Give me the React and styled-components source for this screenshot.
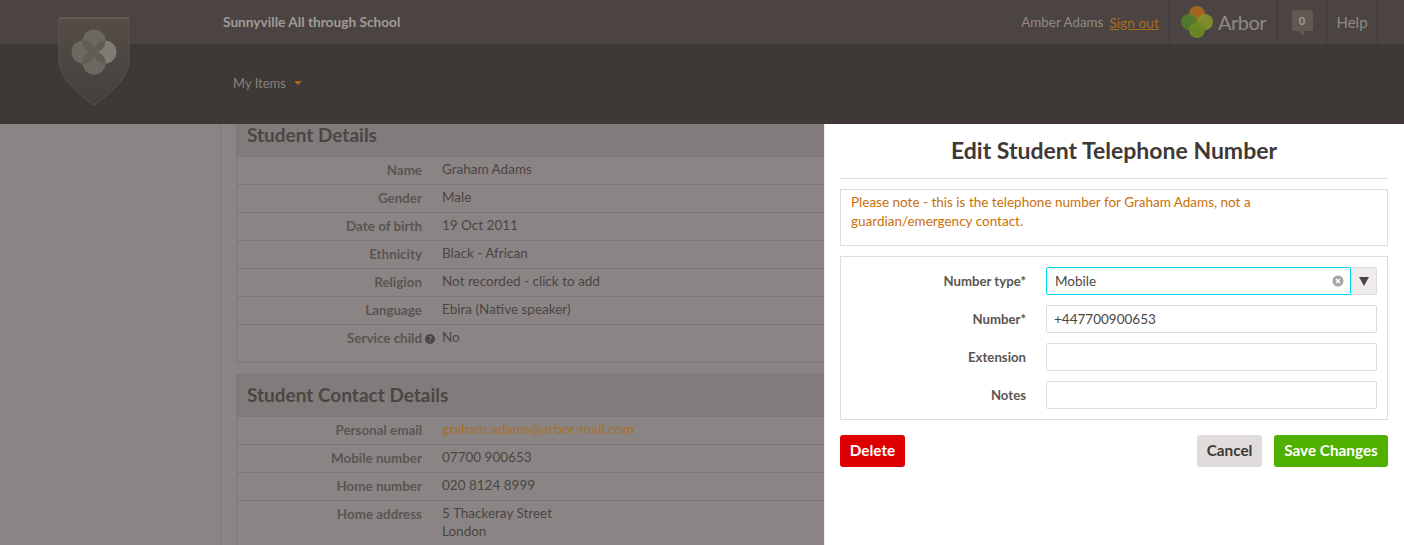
import React from 'react'
import styled, { createGlobalStyle } from 'styled-components'

const Global = createGlobalStyle`
  html, body { margin: 0; padding: 0; height: 100%; }
  body { font-family: "Lato", "Noto Sans", sans-serif; font-size: 14px; color: #3e3936; background: #8a8584; }
`

const Page = styled.div`
  position: relative;
  height: 545px;
  overflow: hidden;
  display: flex;
  flex-direction: column;
`

const TopBar = styled.header`
  height: 44px;
  flex: none;
  box-sizing: border-box;
  display: flex;
  align-items: center;
  padding-left: 223px;
  padding-right: 26px;
  background: #4b4442;
`

const SchoolName = styled.div`
  font-size: 13.7px;
  font-weight: 700;
  margin-top: -1px;
  color: #a09b98;
`

const TopRight = styled.div`
  margin-left: auto;
  display: flex;
  height: 100%;
  align-items: center;
`

const UserName = styled.span`
  font-size: 13.4px;
  color: #8f8a87;
`

const SignOut = styled.a`
  font-size: 13.8px;
  color: #a86a1f;
  text-decoration: underline;
  margin-left: 6px;
  margin-right: 10px;
`

const TopCell = styled.div`
  height: 100%;
  width: ${({ $w }) => $w}px;
  box-sizing: border-box;
  display: flex;
  align-items: center;
  justify-content: center;
  gap: 5px;
  border-left: 1px solid #3f3a37;
  border-right: ${({ $last }) => ($last ? '1px solid #3f3a37' : 'none')};
  color: #8f8a87;
`

const ArborWord = styled.span`
  font-size: 20px;
  letter-spacing: -0.5px;
  color: #8f8a87;
`

const HelpText = styled.span`
  font-size: 15px;
`

const Bubble = styled.div`
  position: relative;
  width: 21px;
  height: 21px;
  margin-top: -3px;
  border-radius: 2px;
  background: #5f5952;
  color: #a09b98;
  font-size: 11px;
  font-weight: 700;
  display: flex;
  align-items: center;
  justify-content: center;
  &::after {
    content: '';
    position: absolute;
    left: 6px;
    bottom: -5px;
    border-left: 6px solid transparent;
    border-top: 5px solid #5f5952;
  }
`

const NavBar = styled.nav`
  height: 80px;
  flex: none;
  display: flex;
  align-items: center;
  padding-left: 233px;
  padding-bottom: 2px;
  box-sizing: border-box;
  background: #3e3936;
`

const NavItem = styled.span`
  font-size: 13px;
  color: #87827f;
  display: flex;
  align-items: center;
  gap: 8px;
  &::after {
    content: '';
    border-left: 4px solid transparent;
    border-right: 4px solid transparent;
    border-top: 4px solid #a86a1f;
  }
`

const ShieldWrap = styled.div`
  position: absolute;
  left: 58px;
  top: 17px;
  width: 72px;
  height: 90px;
`

const Body = styled.div`
  flex: 1;
  min-height: 0;
  display: flex;
`

const Sidebar = styled.aside`
  width: 220px;
  flex: none;
  border-right: 1px solid #7d7876;
`

const Main = styled.main`
  flex: 1;
  min-width: 0;
  overflow: hidden;
  padding: 0 0 0 15px;
`

const Section = styled.section`
  border: 1px solid #7d7876;
  border-right: none;
  margin-top: ${({ $first }) => ($first ? '-10px' : '11px')};
  padding-bottom: ${({ $first }) => ($first ? '10px' : '0')};
`

const SectionTitle = styled.h2`
  margin: 0;
  height: 41px;
  line-height: 39px;
  padding-left: 10px;
  font-size: 19px;
  font-weight: 700;
  color: #4b4644;
  background: #817c7b;
  border-bottom: 1px solid #7d7876;
`

const Row = styled.div`
  display: grid;
  grid-template-columns: 185px 1fr;
  column-gap: 20px;
  padding: 3px 0 6px;
  line-height: 18px;
  border-bottom: ${({ $plain }) => ($plain ? 'none' : '1px solid #7d7876')};
`

const RowLabel = styled.div`
  position: relative;
  text-align: right;
  font-size: 13.4px;
  font-weight: 700;
  line-height: 20px;
  margin-bottom: -2px;
  color: #5a5553;
`

const HelpDot = styled.span`
  position: absolute;
  right: -13px;
  top: 6px;
  width: 10px;
  height: 10px;
  border-radius: 50%;
  background: #4b4644;
  color: #8a8584;
  font-size: 8px;
  line-height: 10px;
  text-align: center;
`

const RowValue = styled.div`
  font-size: 13.5px;
  color: #4b4644;
`

const MailLink = styled.span`
  font-size: 14px;
  color: #a66f2c;
`

const Panel = styled.aside`
  width: 580px;
  flex: none;
  box-sizing: border-box;
  background: #fff;
  border-left: 1px solid #ececec;
  padding: 0 16px 0 15px;
`

const PanelTitle = styled.h1`
  margin: 0;
  height: 55px;
  box-sizing: border-box;
  border-bottom: 1px solid #dedcdc;
  padding-top: 10px;
  line-height: 32px;
  text-align: center;
  font-size: 23px;
  font-weight: 700;
  color: #3e3936;
`

const Note = styled.div`
  margin-top: 10px;
  height: 57px;
  box-sizing: border-box;
  border: 1px solid #dedcdc;
  padding: 3px 125px 3px 10px;
  font-size: 13.5px;
  line-height: 19px;
  color: #c8700a;
`

const FormBox = styled.div`
  margin-top: 10px;
  height: 164px;
  box-sizing: border-box;
  border: 1px solid #dedcdc;
  padding: 10px 10px 10px 0;
  display: flex;
  flex-direction: column;
  gap: 10px;
`

const FormRow = styled.div`
  display: grid;
  grid-template-columns: 185px 1fr;
  column-gap: 20px;
  align-items: center;
`

const FormLabel = styled.label`
  text-align: right;
  font-size: 13.2px;
  font-weight: 700;
  color: #5a5553;
`

const TextInput = styled.div`
  height: 28px;
  box-sizing: border-box;
  border: 1px solid #dedcdc;
  border-radius: 2px;
  padding: 0 7px;
  line-height: 26px;
  font-size: 13.5px;
  color: #4b4644;
`

const SelectWrap = styled.div`
  display: flex;
  height: 28px;
`

const SelectField = styled.div`
  flex: 1;
  box-sizing: border-box;
  border: 1px solid #00d8f0;
  border-radius: 2px 0 0 2px;
  padding: 0 6px 0 8px;
  display: flex;
  align-items: center;
  justify-content: space-between;
  font-size: 13.5px;
  color: #4b4644;
`

const SelectArrow = styled.div`
  width: 26px;
  flex: none;
  box-sizing: border-box;
  display: flex;
  align-items: center;
  justify-content: center;
  background: #eeecea;
  border: 1px solid #dedcdc;
  border-left: none;
  border-radius: 0 2px 2px 0;
  &::after {
    content: '';
    border-left: 5px solid transparent;
    border-right: 5px solid transparent;
    border-top: 9px solid #4b4644;
  }
`

const Actions = styled.div`
  margin-top: 15px;
  display: flex;
  gap: 12px;
`

const Button = styled.button`
  height: 32px;
  width: ${({ $w }) => $w}px;
  padding: 0 0 2px;
  border: none;
  border-radius: 3px;
  font-family: inherit;
  font-size: 15.3px;
  font-weight: 700;
  color: ${({ $fg }) => $fg || '#fff'};
  background: ${({ $bg }) => $bg};
  margin-left: ${({ $push }) => ($push ? 'auto' : '0')};
`

const lobes = [[36, 24, '#6b6761'], [25, 35, '#6b6761'], [47, 35, '#7e7a74'], [36, 46, '#6b6761']]

const ShieldLogo = () => (
  <svg width="72" height="90" viewBox="0 0 72 90">
    <defs>
      <linearGradient id="shieldFill" x1="0" y1="0" x2="0" y2="1">
        <stop offset="0" stopColor="#544c47" />
        <stop offset="1" stopColor="#45403c" />
      </linearGradient>
      <clipPath id="lobeTop"><circle cx="36" cy="24" r="11.5" /></clipPath>
      <clipPath id="lobeBottom"><circle cx="36" cy="46" r="11.5" /></clipPath>
    </defs>
    <path d="M1 1 H71 V43 C71 62 50 78 36 88 C22 78 1 62 1 43 Z" fill="#33302d" fillOpacity="0.5" transform="translate(0 1)" />
    <path d="M1 1 H71 V43 C71 62 50 78 36 88 C22 78 1 62 1 43 Z" fill="url(#shieldFill)" stroke="#5a544e" strokeWidth="1" />
    <path d="M1 1 H71" stroke="#6d665f" strokeWidth="1" />
    {lobes.map(([cx, cy, fill]) => (
      <circle key={`${cx}-${cy}`} cx={cx} cy={cy} r="11.5" fill={fill} />
    ))}
    <g clipPath="url(#lobeTop)">
      <circle cx="25" cy="35" r="11.5" fill="#605b55" />
      <circle cx="47" cy="35" r="11.5" fill="#605b55" />
    </g>
    <g clipPath="url(#lobeBottom)">
      <circle cx="25" cy="35" r="11.5" fill="#605b55" />
      <circle cx="47" cy="35" r="11.5" fill="#605b55" />
    </g>
  </svg>
)

const ArborLogo = () => (
  <svg width="32" height="32" viewBox="0 0 32 32">
    <circle cx="16" cy="8" r="8" fill="#a8691f" fillOpacity="0.92" />
    <circle cx="8" cy="16" r="8" fill="#4f7d2a" fillOpacity="0.92" />
    <circle cx="24" cy="16" r="8" fill="#85902a" fillOpacity="0.92" />
    <circle cx="16" cy="24" r="8" fill="#6e8a22" fillOpacity="0.92" />
  </svg>
)

const ClearIcon = () => (
  <svg width="12" height="12" viewBox="0 0 12 12">
    <circle cx="6" cy="6" r="5.5" fill="#a9a5a3" />
    <path d="M4 4 L8 8 M8 4 L4 8" stroke="#fff" strokeWidth="1.5" />
  </svg>
)

const details = [
  ['Name', 'Graham Adams'],
  ['Gender', 'Male'],
  ['Date of birth', '19 Oct 2011'],
  ['Ethnicity', 'Black - African'],
  ['Religion', 'Not recorded - click to add'],
  ['Language', 'Ebira (Native speaker)'],
]

const contact = [
  ['Personal email', <MailLink>graham.adams@arbor-mail.com</MailLink>],
  ['Mobile number', '07700 900653'],
  ['Home number', '020 8124 8999'],
  ['Home address', <>5 Thackeray Street<br />London</>],
]

export default function App() {
  return (
    <Page>
      <Global />
      <TopBar>
        <SchoolName>Sunnyville All through School</SchoolName>
        <TopRight>
          <UserName>Amber Adams</UserName>
          <SignOut>Sign out</SignOut>
          <TopCell $w={108}><ArborLogo /><ArborWord>Arbor</ArborWord></TopCell>
          <TopCell $w={49}><Bubble>0</Bubble></TopCell>
          <TopCell $w={52} $last><HelpText>Help</HelpText></TopCell>
        </TopRight>
      </TopBar>
      <NavBar><NavItem>My Items</NavItem></NavBar>
      <ShieldWrap><ShieldLogo /></ShieldWrap>
      <Body>
        <Sidebar />
        <Main>
          <Section $first>
            <SectionTitle>Student Details</SectionTitle>
            {details.map(([k, v]) => (
              <Row key={k}><RowLabel>{k}</RowLabel><RowValue>{v}</RowValue></Row>
            ))}
            <Row $plain>
              <RowLabel>Service child<HelpDot>?</HelpDot></RowLabel>
              <RowValue>No</RowValue>
            </Row>
          </Section>
          <Section>
            <SectionTitle>Student Contact Details</SectionTitle>
            {contact.map(([k, v]) => (
              <Row key={k}><RowLabel>{k}</RowLabel><RowValue>{v}</RowValue></Row>
            ))}
          </Section>
        </Main>
        <Panel>
          <PanelTitle>Edit Student Telephone Number</PanelTitle>
          <Note>Please note - this is the telephone number for Graham Adams, not a guardian/emergency contact.</Note>
          <FormBox>
            <FormRow>
              <FormLabel>Number type*</FormLabel>
              <SelectWrap>
                <SelectField>Mobile<ClearIcon /></SelectField>
                <SelectArrow />
              </SelectWrap>
            </FormRow>
            <FormRow>
              <FormLabel>Number*</FormLabel>
              <TextInput>+447700900653</TextInput>
            </FormRow>
            <FormRow>
              <FormLabel>Extension</FormLabel>
              <TextInput />
            </FormRow>
            <FormRow>
              <FormLabel>Notes</FormLabel>
              <TextInput />
            </FormRow>
          </FormBox>
          <Actions>
            <Button $w={65} $bg="#de0000">Delete</Button>
            <Button $w={65} $bg="#e0dcdb" $fg="#3e3936" $push>Cancel</Button>
            <Button $w={114} $bg="#4fb000">Save Changes</Button>
          </Actions>
        </Panel>
      </Body>
    </Page>
  )
}
